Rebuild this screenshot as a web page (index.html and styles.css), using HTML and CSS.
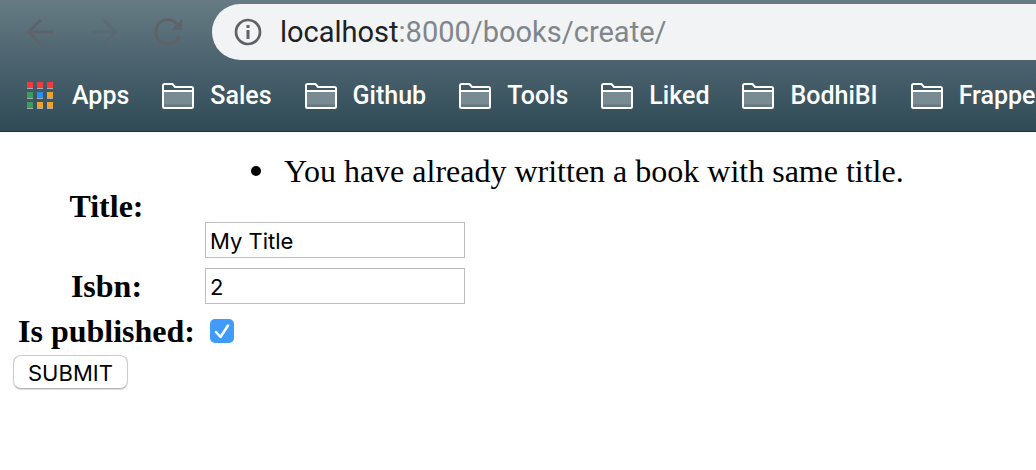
FILE: index.html
```html
<!DOCTYPE html>
<html lang="en">
<head>
<meta charset="utf-8">
<title>Create book</title>
<link rel="stylesheet" href="styles.css">
</head>
<body>
<svg class="sprite" aria-hidden="true">
  <symbol id="folder" viewBox="0 0 32 26">
    <path d="M2 9h28v15H2z" fill="#788b92"/>
    <path d="M2 21.500h28V24H2z" fill="#66777e"/>
    <path d="M1 8V2.500Q1 1 2.500 1H10.500L13 4H29.500Q31 4 31 5.500V23.500Q31 25 29.500 25H2.500Q1 25 1 23.500V8H31" fill="none" stroke="#fff" stroke-width="2"/>
  </symbol>
</svg>
<header class="browser">
  <div class="toolbar">
    <nav class="controls" aria-label="Navigation">
      <button class="control" type="button" aria-label="Back">
        <svg viewBox="0 0 28 28"><path d="M27 14H3M14.500 2 2.500 14l12 12" fill="none" stroke="currentColor" stroke-width="3"/></svg>
      </button>
      <button class="control control-off" type="button" aria-label="Forward">
        <svg viewBox="0 0 28 28"><path d="M1 14h24M13.500 2l12 12-12 12" fill="none" stroke="currentColor" stroke-width="3"/></svg>
      </button>
      <button class="control" type="button" aria-label="Reload">
        <svg viewBox="0 0 28 28"><path d="M25 18A12 12 0 1 1 22.500 5.500" fill="none" stroke="currentColor" stroke-width="3"/><path d="M28 1v11H17z" fill="currentColor"/></svg>
      </button>
    </nav>
    <div class="address">
      <svg class="info" viewBox="0 0 28 28"><circle cx="14" cy="14" r="12" fill="none" stroke="#5f6368" stroke-width="2.700"/><path d="M12.500 7h3v3h-3zM12.500 12h3v9h-3z" fill="#5f6368"/></svg>
      <span class="url"><span class="host">localhost</span>:8000/books/create/</span>
    </div>
  </div>
  <nav class="bookmarks" aria-label="Bookmarks">
    <a class="bookmark" href="#">
      <svg class="apps" viewBox="0 0 26 27">
        <path d="M0 1h6v6H0zM10 1h6v6h-6zM20 1h6v6h-6zM0 11h6v6H0zM10 11h6v6h-6zM20 11h6v6h-6zM0 21h6v6H0zM10 21h6v6h-6zM20 21h6v6h-6z" fill="#a3adb1"/>
        <path d="M0 0h6v6H0zM10 0h6v6h-6zM20 0h6v6h-6z" fill="#f23c3c"/>
        <path d="M0 10h6v6H0zM0 20h6v6H0z" fill="#3a9d5d"/>
        <path d="M10 10h6v6h-6z" fill="#2b8cf3"/>
        <path d="M20 10h6v6h-6zM10 20h6v6h-6zM20 20h6v6h-6z" fill="#f0a126"/>
      </svg>Apps</a>
    <a class="bookmark" href="#"><svg class="folder"><use href="#folder"/></svg>Sales</a>
    <a class="bookmark" href="#"><svg class="folder"><use href="#folder"/></svg>Github</a>
    <a class="bookmark" href="#"><svg class="folder"><use href="#folder"/></svg>Tools</a>
    <a class="bookmark" href="#"><svg class="folder"><use href="#folder"/></svg>Liked</a>
    <a class="bookmark" href="#"><svg class="folder"><use href="#folder"/></svg>BodhiBI</a>
    <a class="bookmark" href="#"><svg class="folder"><use href="#folder"/></svg>Frappe</a>
  </nav>
</header>
<main class="page">
  <form>
    <table class="fields">
      <tr>
        <th><label for="title">Title:</label></th>
        <td>
          <ul class="errors"><li class="error">You have already written a book with same title.</li></ul>
          <input class="text" id="title" type="text" value="My Title">
        </td>
      </tr>
      <tr>
        <th><label for="isbn">Isbn:</label></th>
        <td><input class="text" id="isbn" type="text" value="2"></td>
      </tr>
      <tr>
        <th><label for="published">Is published:</label></th>
        <td><span class="tick"><input class="check" id="published" type="checkbox" checked><svg class="mark" viewBox="0 0 24 24"><path d="M6 13l4.500 5L18 6.500" fill="none" stroke="#fff" stroke-width="2.500" stroke-linecap="round" stroke-linejoin="round"/></svg></span></td>
      </tr>
    </table>
    <button class="submit" type="submit">SUBMIT</button>
  </form>
</main>
</body>
</html>
```
FILE: styles.css
```css
* { box-sizing: border-box; }
body {
  margin: 0;
  background: #fff;
  color: #000;
  font: 32px/36px "Liberation Serif", serif;
}
svg { display: block; flex: none; }
.sprite { position: absolute; width: 0; height: 0; }
.browser {
  overflow: hidden;
  padding-top: 4px;
  border-bottom: 1px solid #1f2f3c;
  background: linear-gradient(#667b83, #4a626e 50%, #2f4b56);
  font-family: Roboto, sans-serif;
}
.toolbar { display: flex; align-items: center; }
.controls { display: flex; gap: 36px; padding: 0 30px 0 26px; }
.control {
  width: 28px;
  height: 28px;
  padding: 0;
  border: 0;
  background: none;
  color: #5f6368;
}
.control-off { opacity: 0.4; }
.address {
  display: flex;
  flex: 1;
  align-items: center;
  gap: 18px;
  height: 56px;
  padding-left: 22px;
  border-radius: 28px 0 0 28px;
  background: #f1f3f5;
}
.info { width: 28px; height: 28px; }
.url { color: #80868b; font-size: 29px; white-space: nowrap; }
.host { color: #202124; }
.bookmarks {
  display: flex;
  gap: 33px;
  height: 71px;
  padding-left: 27px;
  align-items: center;
}
.bookmark {
  display: flex;
  flex: none;
  align-items: center;
  gap: 16px;
  color: #fff;
  font-size: 25px;
  font-weight: 500;
  text-decoration: none;
}
.apps { width: 26px; height: 27px; margin-right: 3px; }
.folder { width: 32px; height: 26px; }
.page { padding: 15px 12px; }
.fields { border-spacing: 4px; }
.fields th, .fields td { padding: 2px; }
.fields td { text-align: left; }
.errors { margin: 0 0 33px; padding-left: 48px; list-style: none; }
.error { display: flex; align-items: center; gap: 23px; }
.error::before {
  content: "";
  flex: none;
  width: 10px;
  height: 10px;
  border-radius: 50%;
  background: #000;
}
.text {
  display: block;
  width: 260px;
  height: 36px;
  margin: 1px 2px;
  padding: 4px 4px 2px;
  border: 1px solid #bdbdbd;
  background: #fff;
  color: #000;
  font: 22px Inter, sans-serif;
}
.tick { display: grid; width: 24px; margin-left: 7px; }
.check, .mark { grid-area: 1 / 1; width: 24px; height: 24px; margin: 0; }
.check { appearance: none; border-radius: 5px; background: #409bfa; }
.mark { visibility: hidden; pointer-events: none; }
.check:checked + .mark { visibility: visible; }
.submit {
  display: block;
  height: 34px;
  margin-left: 1px;
  padding: 2px 14px 0;
  border: 1px solid #cbcbcb;
  border-bottom-color: #b5b5b5;
  border-radius: 8px;
  background: #fff;
  box-shadow: 0 1px 1px #ddd;
  color: #000;
  font: 22px Inter, sans-serif;
}
```
